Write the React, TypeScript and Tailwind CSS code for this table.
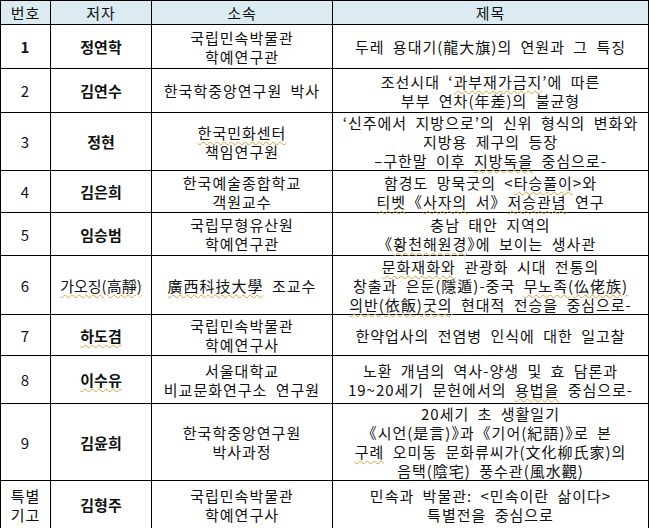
import React from "react";

function Sq({ children }: { children: React.ReactNode }) {
  return (
    <span className="underline decoration-wavy decoration-[#d9a441] decoration-1 underline-offset-2">
      {children}
    </span>
  );
}

// half-width alternates: the source font draws these brackets narrow
const L = () => <span className="[font-feature-settings:'halt']">《</span>;
const R = () => <span className="[font-feature-settings:'halt']">》</span>;

type Row = {
  no: React.ReactNode;
  author: React.ReactNode;
  bold?: boolean;
  org: React.ReactNode;
  title: React.ReactNode;
  h: string;
  noBold?: boolean;
};

const rows: Row[] = [
  {
    no: "1",
    noBold: true,
    author: "정연학",
    bold: true,
    org: <>국립민속박물관<br />학예연구관</>,
    title: <>두레 용대기(龍大旗)의 연원과 그 특징</>,
    h: "h-[44px]",
  },
  {
    no: "2",
    author: "김연수",
    bold: true,
    org: <>한국학중앙연구원 박사</>,
    title: <>조선시대 ‘<Sq>과부재가금지</Sq>’에 따른<br />부부 연차(年差)의 불균형</>,
    h: "h-[44px]",
  },
  {
    no: "3",
    author: "정현",
    bold: true,
    org: <><Sq>한국민화센터</Sq><br />책임연구원</>,
    title: <>‘신주에서 지방으로’의 신위 형식의 변화와<br />지방용 제구의 등장<br />–구한말 이후 <Sq>지방독을</Sq> 중심으로-</>,
    h: "h-[58px]",
  },
  {
    no: "4",
    author: "김은희",
    bold: true,
    org: <>한국예술종합학교<br />객원교수</>,
    title: <>함경도 망묵굿의 &lt;<Sq>타승풀이</Sq>&gt;와<br /><Sq>티벳</Sq> <L /><Sq>사자의</Sq> 서<R /> <Sq>저승관념</Sq> 연구</>,
    h: "h-[42px]",
  },
  {
    no: "5",
    author: "임승범",
    bold: true,
    org: <>국립무형유산원<br />학예연구관</>,
    title: <>충남 태안 지역의<br /><L /><Sq>황천해원경</Sq><R />에 보이는 생사관</>,
    h: "h-[43px]",
  },
  {
    no: "6",
    author: <Sq>가오징(高靜)</Sq>,
    bold: false,
    org: <><Sq>廣西科技大學</Sq> 조교수</>,
    title: <><Sq>문화재화와</Sq> 관광화 시대 전통의<br />창출과 은둔(隱遁)-중국 <Sq>무노족(仫佬族)</Sq><br /><Sq>의반(依飯)굿의</Sq> 현대적 전승을 중심으로-</>,
    h: "h-[59px]",
  },
  {
    no: "7",
    author: <Sq>하도겸</Sq>,
    bold: true,
    org: <>국립민속박물관<br />학예연구사</>,
    title: <>한약업사의 전염병 인식에 대한 일고찰</>,
    h: "h-[41px]",
  },
  {
    no: "8",
    author: <Sq>이수유</Sq>,
    bold: true,
    org: <>서울대학교<br />비교문화연구소 연구원</>,
    title: <>노환 개념의 역사-양생 및 효 담론과<br />19~20세기 문헌에서의 <Sq>용법을</Sq> 중심으로-</>,
    h: "h-[48px]",
  },
  {
    no: "9",
    author: "김윤희",
    bold: true,
    org: <>한국학중앙연구원<br />박사과정</>,
    title: <>20세기 초 생활일기<br /><L />시언(是言)<R />과 <L />기어(紀語)<R />로 본<br /><Sq>구례</Sq> 오미동 문화류씨가(文化柳氏家)의<br />음택(陰宅) 풍수관(風水觀)</>,
    h: "h-[75px]",
  },
  {
    no: <>특별<br />기고</>,
    author: "김형주",
    bold: true,
    org: <>국립민속박물관<br />학예연구사</>,
    title: <>민속과 박물관: &lt;민속이란 삶이다&gt;<br />특별전을 중심으로</>,
    h: "h-[48px]",
  },
];

export default function App() {
  const cell = "border border-black text-center align-middle p-0";
  return (
    <div className="w-[650px] h-[528px] bg-white overflow-hidden">
      <table
        className="table-fixed border-collapse w-[648px] text-[15px] leading-[19px] tracking-[1px] text-[#111] [word-spacing:4px]"
        style={{ fontFamily: '"Noto Sans CJK KR", "Noto Sans", sans-serif' }}
      >
        <colgroup>
          <col className="w-[50px]" />
          <col className="w-[101px]" />
          <col className="w-[181px]" />
          <col className="w-[316px]" />
        </colgroup>
        <thead>
          <tr className="h-[24px] bg-[#dcebf2]">
            <th className={`${cell} font-normal`}>번호</th>
            <th className={`${cell} font-normal`}>저자</th>
            <th className={`${cell} font-normal`}>소속</th>
            <th className={`${cell} font-normal`}>제목</th>
          </tr>
        </thead>
        <tbody>
          {rows.map((r, i) => (
            <tr key={i} className={r.h}>
              <td className={`${cell} ${r.noBold ? "font-bold" : ""}`}>{r.no}</td>
              <td className={`${cell} whitespace-nowrap tracking-normal ${r.bold ? "font-bold" : ""}`}>{r.author}</td>
              <td className={`${cell} whitespace-nowrap`}>{r.org}</td>
              <td className={`${cell} whitespace-nowrap`}>{r.title}</td>
            </tr>
          ))}
        </tbody>
      </table>
    </div>
  );
}
